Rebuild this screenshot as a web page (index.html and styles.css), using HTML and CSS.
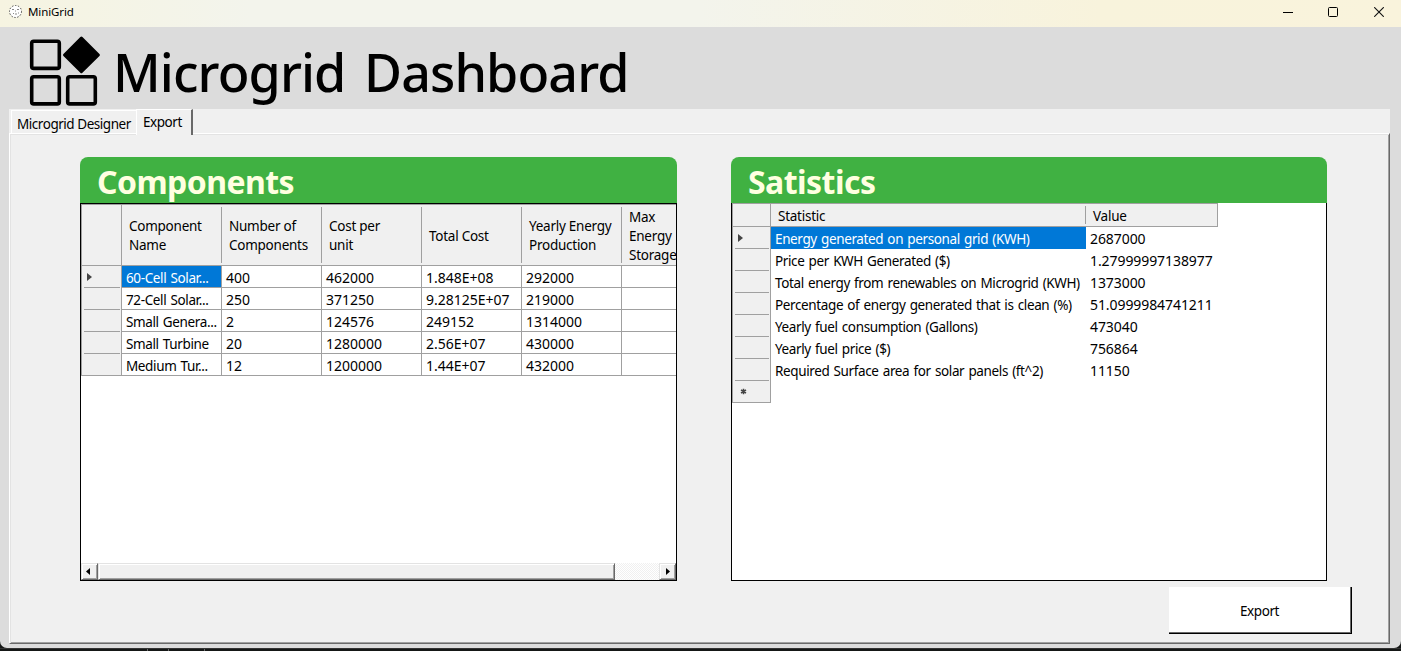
FILE: index.html
```
<!DOCTYPE html>
<html lang="en">
<head>
<meta charset="utf-8">
<title>MiniGrid</title>
<link rel="stylesheet" href="styles.css">
</head>
<body>
<div class="window">
  <header class="titlebar">
    <svg class="app-icon" width="13" height="13" viewBox="0 0 13 13"><circle cx="6.5" cy="6.5" r="6" fill="#fff" stroke="#444" stroke-width="1" stroke-dasharray="1.4 1.6"/><path d="M3 4.5h2M8 4.5h2M4 8.5h1M6 9h2M9 8h1M6 6h1" stroke="#888" stroke-width="1"/></svg>
    <span class="caption">MiniGrid</span>
    <div class="controls">
      <svg width="10" height="10" viewBox="0 0 10 10"><path d="M0 5.5h10" stroke="#000"/></svg>
      <svg width="10" height="10" viewBox="0 0 10 10"><rect x=".5" y=".5" width="9" height="9" rx="1" fill="none" stroke="#000"/></svg>
      <svg width="10" height="10" viewBox="0 0 10 10"><path d="M.2 .2l9.6 9.6M9.8 .2L.2 9.8" stroke="#111" stroke-width="1.1"/></svg>
    </div>
  </header>
  <div class="banner">
    <svg class="logo" width="74" height="74" viewBox="0 0 74 74"><g fill="none" stroke="#000" stroke-width="3.6"><rect x="3.7" y="7.2" width="27.6" height="27.2" rx="2"/><rect x="3.7" y="42.7" width="27.6" height="27.2" rx="2"/><rect x="39.7" y="42.7" width="27.6" height="27.2" rx="2"/></g><path d="M53.4 4L70.4 21 53.4 37.6 36.5 21z" stroke="#000" stroke-width="3" stroke-linejoin="round"/></svg>
    <h1 class="title">Microgrid Dashboard</h1>
  </div>
  <main class="tabs">
    <nav class="tabrow">
      <div class="tab">Microgrid Designer</div>
      <div class="tab active">Export</div>
    </nav>
    <section class="page">
      <div class="cards">
        <article class="card">
          <h2 class="card-title">Components</h2>
          <div class="frame framed-top">
            <div class="grid components">
              <div class="corner"></div>
              <div class="head"><span>Component<br>Name</span></div><div class="head"><span>Number of<br>Components</span></div><div class="head"><span>Cost per<br>unit</span></div><div class="head"><span>Total Cost</span></div><div class="head"><span>Yearly Energy<br>Production</span></div><div class="head last"><span>Max<br>Energy<br>Storage</span></div>
              <div class="rowhead current"></div><div class="cell label selected">60-Cell Solar...</div><div class="cell">400</div><div class="cell">462000</div><div class="cell">1.848E+08</div><div class="cell">292000</div><div class="cell"></div>
              <div class="rowhead"></div><div class="cell label">72-Cell Solar...</div><div class="cell">250</div><div class="cell">371250</div><div class="cell">9.28125E+07</div><div class="cell">219000</div><div class="cell"></div>
              <div class="rowhead"></div><div class="cell label">Small Genera...</div><div class="cell">2</div><div class="cell">124576</div><div class="cell">249152</div><div class="cell">1314000</div><div class="cell"></div>
              <div class="rowhead"></div><div class="cell label">Small Turbine</div><div class="cell">20</div><div class="cell">1280000</div><div class="cell">2.56E+07</div><div class="cell">430000</div><div class="cell"></div>
              <div class="rowhead end"></div><div class="cell label">Medium Tur...</div><div class="cell">12</div><div class="cell">1200000</div><div class="cell">1.44E+07</div><div class="cell">432000</div><div class="cell"></div>
            </div>
            <div class="scrollbar">
              <div class="knob back"><svg width="4" height="7" viewBox="0 0 4 7"><path d="M4 0v7L0 3.5z"/></svg></div>
              <div class="knob thumb"></div>
              <div class="track"></div>
              <div class="knob"><svg width="4" height="7" viewBox="0 0 4 7"><path d="M0 0v7l4-3.5z"/></svg></div>
            </div>
          </div>
        </article>
        <article class="card">
          <h2 class="card-title">Satistics</h2>
          <div class="frame">
            <div class="grid statistics">
              <div class="corner"></div><div class="head"><span>Statistic</span></div><div class="head last"><span>Value</span></div>
              <div class="rowhead current"></div><div class="cell label selected">Energy generated on personal grid (KWH)</div><div class="cell">2687000</div>
              <div class="rowhead"></div><div class="cell label">Price per KWH Generated ($)</div><div class="cell">1.27999997138977</div>
              <div class="rowhead"></div><div class="cell label">Total energy from renewables on Microgrid (KWH)</div><div class="cell">1373000</div>
              <div class="rowhead"></div><div class="cell label">Percentage of energy generated that is clean (%)</div><div class="cell">51.0999984741211</div>
              <div class="rowhead"></div><div class="cell label">Yearly fuel consumption (Gallons)</div><div class="cell">473040</div>
              <div class="rowhead"></div><div class="cell label">Yearly fuel price ($)</div><div class="cell">756864</div>
              <div class="rowhead"></div><div class="cell label">Required Surface area for solar panels (ft^2)</div><div class="cell">11150</div>
              <div class="rowhead end new"><svg width="7" height="7" viewBox="0 0 7 7"><path d="M3.5 .8v5.4M1 2l5 3M6 2L1 5" stroke="#444" stroke-width="1.5"/></svg></div><div class="cell"></div><div class="cell"></div>
            </div>
          </div>
        </article>
      </div>
      <button class="export">Export</button>
    </section>
  </main>
</div>
<footer class="desktop"><i></i><i></i><i></i></footer>
</body>
</html>
```
FILE: styles.css
```
* { box-sizing: border-box; }
body {
  margin: 0;
  width: 1401px;
  height: 651px;
  overflow: hidden;
  background: #151716;
  color: #000;
  font: 14px/19px "Noto Sans", "Open Sans", sans-serif;
}
.window {
  display: flex;
  flex-direction: column;
  height: 648px;
  background: #dcdcdc;
  border-radius: 0 0 7px 7px;
  overflow: hidden;
}
.titlebar {
  display: flex;
  align-items: center;
  height: 27px;
  padding: 0 17px 4px 9px;
  background: linear-gradient(90deg, #f6f4e1 0, #f3f4ec 250px, #f3f4ec 700px, #f8f3dc 1100px, #f9f3dc 100%);
}
.caption { margin-left: 6px; font-size: 11.5px; letter-spacing: -0.1px; }
.controls { display: flex; gap: 35px; margin-left: auto; }
.controls svg:last-child { margin-left: 1px; }
.banner { display: flex; height: 82px; padding-left: 28px; }
.logo { flex: none; margin-top: 7px; }
.title { margin: 9px 0 0 11px; font-size: 52px; line-height: 72px; font-weight: 500; letter-spacing: -0.9px; word-spacing: 6px; white-space: nowrap; }
.tabs { display: flex; flex-direction: column; width: 1381px; height: 535px; margin-left: 9px; background: #f0f0f0; }
.tabrow { display: flex; align-items: flex-end; height: 24px; padding-left: 2px; }
.tab { height: 23px; width: 125px; padding: 4px 0 0 5px; border: 1px solid #fff; border-width: 1px 0 0 1px; white-space: nowrap; font-size: 13.5px; letter-spacing: -0.46px; }
.tab.active { width: 57px; height: 26px; margin-bottom: -2px; padding: 3px 0 0 6px; border-right: 2px solid #696969; background: #f0f0f0; z-index: 1; }
.page {
  flex: 1;
  border: 1px solid;
  border-color: #fff #696969 #696969 #fff;
  box-shadow: inset 1px 1px #e3e3e3, inset -1px -1px #a0a0a0;
}
.cards { display: flex; gap: 54px; padding: 23px 0 0 70px; }
.card { width: 597px; height: 424px; display: flex; flex-direction: column; }
.card:last-child { width: 596px; }
.card-title { flex: none; margin: 0; height: 46px; padding: 1px 0 0 17px; border-radius: 8px 8px 0 0; background: #40b142; color: #ffffe0; font-size: 32px; line-height: 47px; font-weight: 700; letter-spacing: -0.55px; }
.frame { flex: 1; display: flex; flex-direction: column; border: 1px solid #000; border-top: 0; background: #fff; overflow: hidden; }
.framed-top { border-top: 1px solid #000; }
.grid { display: grid; border-left: 1px solid #a0a0a0; border-top: 1px solid #a0a0a0; width: max-content; }
.components { grid-template-columns: 40px repeat(6, 100px); grid-template-rows: 61px repeat(5, 22px); }
.statistics { grid-template-columns: 38px 315px 132px; grid-template-rows: 23px repeat(8, 22px); }
.corner { background: #f0f0f0; border-right: 1px solid #a0a0a0; border-bottom: 1px solid #a0a0a0; }
.head {
  display: flex;
  align-items: center;
  padding: 2px 0 0 7px;
  border-bottom: 1px solid #a0a0a0;
  background: linear-gradient(#a0a0a0, #a0a0a0) right 0 top 2px / 1px calc(100% - 4px) no-repeat #f0f0f0;
  white-space: nowrap;
  font-size: 13.5px;
  letter-spacing: -0.25px;
}
.statistics .head.last { border-right: 1px solid #a0a0a0; background: #f0f0f0; }
.rowhead {
  display: flex;
  align-items: center;
  padding-left: 5px;
  border-right: 1px solid #a0a0a0;
  background: linear-gradient(#a0a0a0, #a0a0a0) 2px 100% / calc(100% - 3px) 1px no-repeat #f0f0f0;
}
.rowhead.end { border-bottom: 1px solid #a0a0a0; background: #f0f0f0; }
.rowhead.current::before { content: ""; border-left: 5px solid #444; border-top: 4.5px solid transparent; border-bottom: 4.5px solid transparent; }
.rowhead.new { padding-left: 7px; }
.cell { padding: 2px 0 0 4px; overflow: hidden; white-space: nowrap; }
.cell.label { padding-top: 3px; font-size: 13.5px; letter-spacing: -0.37px; word-spacing: 1px; }
.statistics .cell:not(.label) { letter-spacing: -0.08px; }
.components .cell { border-right: 1px solid #a0a0a0; border-bottom: 1px solid #a0a0a0; }
.cell.selected { color: #fff; background: #0078d7; background-clip: padding-box; }
.scrollbar { display: flex; height: 17px; margin-top: auto; }
.knob {
  display: flex;
  align-items: center;
  justify-content: center;
  width: 17px;
  border: 1px solid;
  border-color: #e3e3e3 #696969 #696969 #e3e3e3;
  box-shadow: inset 1px 1px #fff, inset -1px -1px #a0a0a0;
  background: #f0f0f0;
}
.knob.back { padding-right: 3px; }
.thumb { width: 517px; }
.track { flex: 1; background: repeating-conic-gradient(#fff 0 25%, #f0f0f0 0 50%) 0 0 / 2px 2px; }
.export {
  display: block;
  width: 183px;
  height: 47px;
  margin: 6px 0 0 1159px;
  padding: 2px 2px 0 0;
  border: 0;
  background: #fff;
  box-shadow: inset -1px -1px #000, inset -2px -2px #696969;
  font: 13.5px/19px "Noto Sans", "Open Sans", sans-serif;
  letter-spacing: -0.4px;
  color: #000;
}
.desktop { display: flex; height: 3px; padding-left: 147px; border-top: 1px solid #333; gap: 20px; }
.desktop i { width: 1px; height: 2px; background: #666; }
.desktop i:last-child { margin-left: 15px; }
```
